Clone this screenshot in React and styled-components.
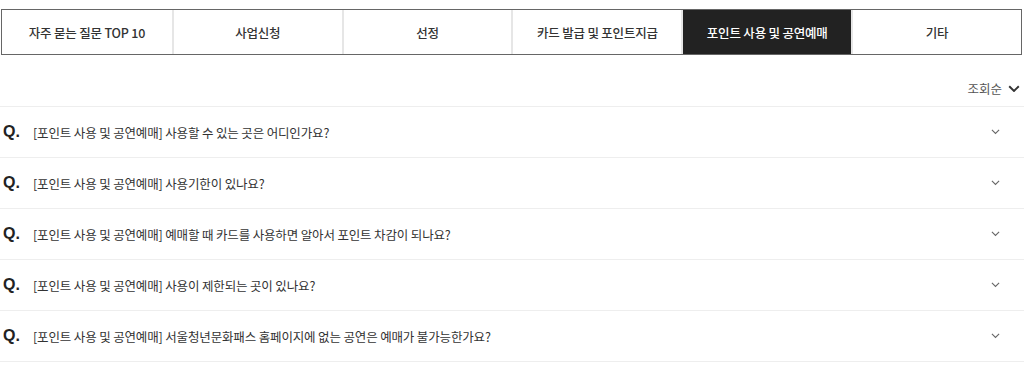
import React from 'react';
import styled, { createGlobalStyle } from 'styled-components';

const GlobalStyle = createGlobalStyle`
    body {
        margin: 0;
        background: #fff;
        font-family: "Noto Sans CJK KR", "Noto Sans", sans-serif;
        color: #333;
    }
`;

const Page = styled.div`
    width: 1024px;
    padding-top: 9px;
    box-sizing: border-box;
`;

const TabBar = styled.ul`
    display: grid;
    grid-template-columns: repeat(6, 1fr);
    margin: 0 2px 0 1px;
    padding: 0;
    list-style: none;
    border: 1px solid #666;
    height: 46px;
    box-sizing: border-box;
`;

const Tab = styled.li`
    display: flex;
    align-items: center;
    justify-content: center;
    font-size: 12.5px;
    font-weight: 500;
    color: ${(p) => (p.$active ? '#fff' : '#333')};
    background: ${(p) => (p.$active ? '#222' : '#fff')};
    border-left: ${(p) => (p.$first ? 'none' : '2px solid #e6e6e6')};
    letter-spacing: -0.2px;
`;

const SortRow = styled.div`
    display: flex;
    justify-content: flex-end;
    align-items: center;
    gap: 6px;
    height: 51px;
    padding: 16px 4px 0 0;
    box-sizing: border-box;
    font-size: 12.5px;
    color: #555;
`;

const List = styled.ul`
    margin: 0;
    padding: 0;
    list-style: none;
    border-top: 1px solid #eee;
`;

const Row = styled.li`
    display: flex;
    align-items: center;
    height: 51px;
    box-sizing: border-box;
    border-bottom: 1px solid #eee;
    padding: 0 24px 0 3px;
`;

const QMark = styled.span`
    width: 30px;
    font-family: "Liberation Sans", Arial, sans-serif;
    font-weight: bold;
    font-size: 16px;
    color: #222;
`;

const Question = styled.span`
    flex: 1;
    font-size: 12.5px;
    color: #333;
    letter-spacing: -0.15px;
`;

const Chevron = ({ size = 10, stroke = 1.4, color = '#555' }) => (
    <svg width={size} height={size * 0.6} viewBox="0 0 10 6" fill="none">
        <path d="M1 1l4 4 4-4" stroke={color} strokeWidth={stroke} />
    </svg>
);

const tabs = ['자주 묻는 질문 TOP 10', '사업신청', '선정', '카드 발급 및 포인트지급', '포인트 사용 및 공연예매', '기타'];

const questions = [
    '사용할 수 있는 곳은 어디인가요?',
    '사용기한이 있나요?',
    '예매할 때 카드를 사용하면 알아서 포인트 차감이 되나요?',
    '사용이 제한되는 곳이 있나요?',
    '서울청년문화패스 홈페이지에 없는 공연은 예매가 불가능한가요?',
];

function App() {
    return (
        <Page>
            <GlobalStyle />
            <TabBar>
                {tabs.map((t, i) => (
                    <Tab key={t} $first={i === 0} $active={i === 4}>{t}</Tab>
                ))}
            </TabBar>
            <SortRow>
                조회순
                <Chevron size={12} stroke={1.6} color="#333" />
            </SortRow>
            <List>
                {questions.map((q) => (
                    <Row key={q}>
                        <QMark>Q.</QMark>
                        <Question>[포인트 사용 및 공연예매] {q}</Question>
                        <Chevron size={9} stroke={1.2} color="#666" />
                    </Row>
                ))}
            </List>
        </Page>
    );
}

export default App;
